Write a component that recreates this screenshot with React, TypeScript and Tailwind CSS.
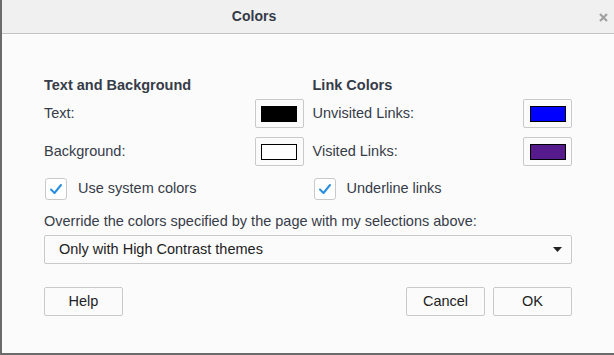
import { useState } from 'react';

const font = { fontFamily: '"Liberation Sans", Arial, Helvetica, sans-serif' };

// Colour swatch button: grey frame with a bordered colour chip inside
const Swatch = ({ color }: { color: string }) => (
  <button className="w-[49px] h-[29px] border border-[#c9c9c9] rounded-[2px] bg-[#fbfbfb] flex items-center justify-center">
    <span className="block w-[36px] h-[16px] border border-black" style={{ background: color }} />
  </button>
);

const CheckBox = ({ checked, onToggle, label }: { checked: boolean; onToggle: () => void; label: string }) => (
  <label className="flex items-center gap-[11px] cursor-pointer" onClick={onToggle}>
    <span className="w-[22px] h-[22px] border border-[#c9c9c9] rounded-[3px] bg-white flex items-center justify-center">
      {checked && (
        <svg width="14" height="12" viewBox="0 0 14 12" fill="none">
          <path d="M2 6.5 L5.5 10 L12 2" stroke="#2a8ee0" strokeWidth="2" strokeLinecap="round" strokeLinejoin="round" />
        </svg>
      )}
    </span>
    <span>{label}</span>
  </label>
);

const ColorRow = ({ label, color }: { label: string; color: string }) => (
  <div className="flex items-center justify-between">
    <span>{label}</span>
    <Swatch color={color} />
  </div>
);

const App = () => {
  const [systemColors, setSystemColors] = useState(true);
  const [underline, setUnderline] = useState(true);

  return (
    <div className="w-[614px] h-[355px] bg-[#fbfbfb] border-l-2 border-b-2 border-[#6b6b6b] text-[14.5px] text-[#363c48] flex flex-col" style={font}>
      {/* Header */}
      <div className="h-[34px] shrink-0 bg-[#f0f0f0] border-b border-[#c4c4c4] flex items-center relative">
        <div className="w-[504px] text-center font-bold text-[14px] text-[#333a47]">Colors</div>
        <button className="absolute right-[6px] top-[12px] w-[10px] h-[10px] flex items-center justify-center">
          <svg width="9" height="9" viewBox="0 0 9 9">
            <path d="M1 1 L8 8 M8 1 L1 8" stroke="#a0a0a0" strokeWidth="2.2" />
          </svg>
        </button>
      </div>

      {/* Body */}
      <div className="pl-[42px] pr-[42px] pt-[43px]">
        <div className="grid grid-cols-2 gap-x-[9px]">
          <div className="flex flex-col">
            <div className="font-bold leading-[16px] mb-[6px]">Text and Background</div>
            <ColorRow label="Text:" color="#000000" />
            <div className="h-[9px]" />
            <ColorRow label="Background:" color="#ffffff" />
            <div className="h-[12px]" />
            <div className="pl-[1px]">
              <CheckBox checked={systemColors} onToggle={() => setSystemColors(!systemColors)} label="Use system colors" />
            </div>
          </div>
          <div className="flex flex-col">
            <div className="font-bold leading-[16px] mb-[6px]">Link Colors</div>
            <ColorRow label="Unvisited Links:" color="#0000ff" />
            <div className="h-[9px]" />
            <ColorRow label="Visited Links:" color="#551a8b" />
            <div className="h-[12px]" />
            <div className="pl-[1px]">
              <CheckBox checked={underline} onToggle={() => setUnderline(!underline)} label="Underline links" />
            </div>
          </div>
        </div>

        <div className="mt-[13px] leading-[16px]">Override the colors specified by the page with my selections above:</div>

        <button className="mt-[6px] w-full h-[29px] border border-[#c9c9c9] rounded-[2px] bg-[#fbfbfb] flex items-center justify-between pl-[14px] pr-[9px] text-[#222]">
          <span>Only with High Contrast themes</span>
          <svg width="9" height="5" viewBox="0 0 9 5">
            <path d="M0 0 L9 0 L4.5 5 Z" fill="#222" />
          </svg>
        </button>

        <div className="mt-[23px] flex items-center">
          <button className="w-[79px] h-[29px] border border-[#c9c9c9] rounded-[2px] bg-[#fbfbfb] text-[#222]">Help</button>
          <div className="flex-1" />
          <button className="w-[79px] h-[29px] border border-[#c9c9c9] rounded-[2px] bg-[#fbfbfb] text-[#222]">Cancel</button>
          <button className="ml-[8px] w-[79px] h-[29px] border border-[#c9c9c9] rounded-[2px] bg-[#fbfbfb] text-[#222]">OK</button>
        </div>
      </div>
    </div>
  );
};

export default App;
